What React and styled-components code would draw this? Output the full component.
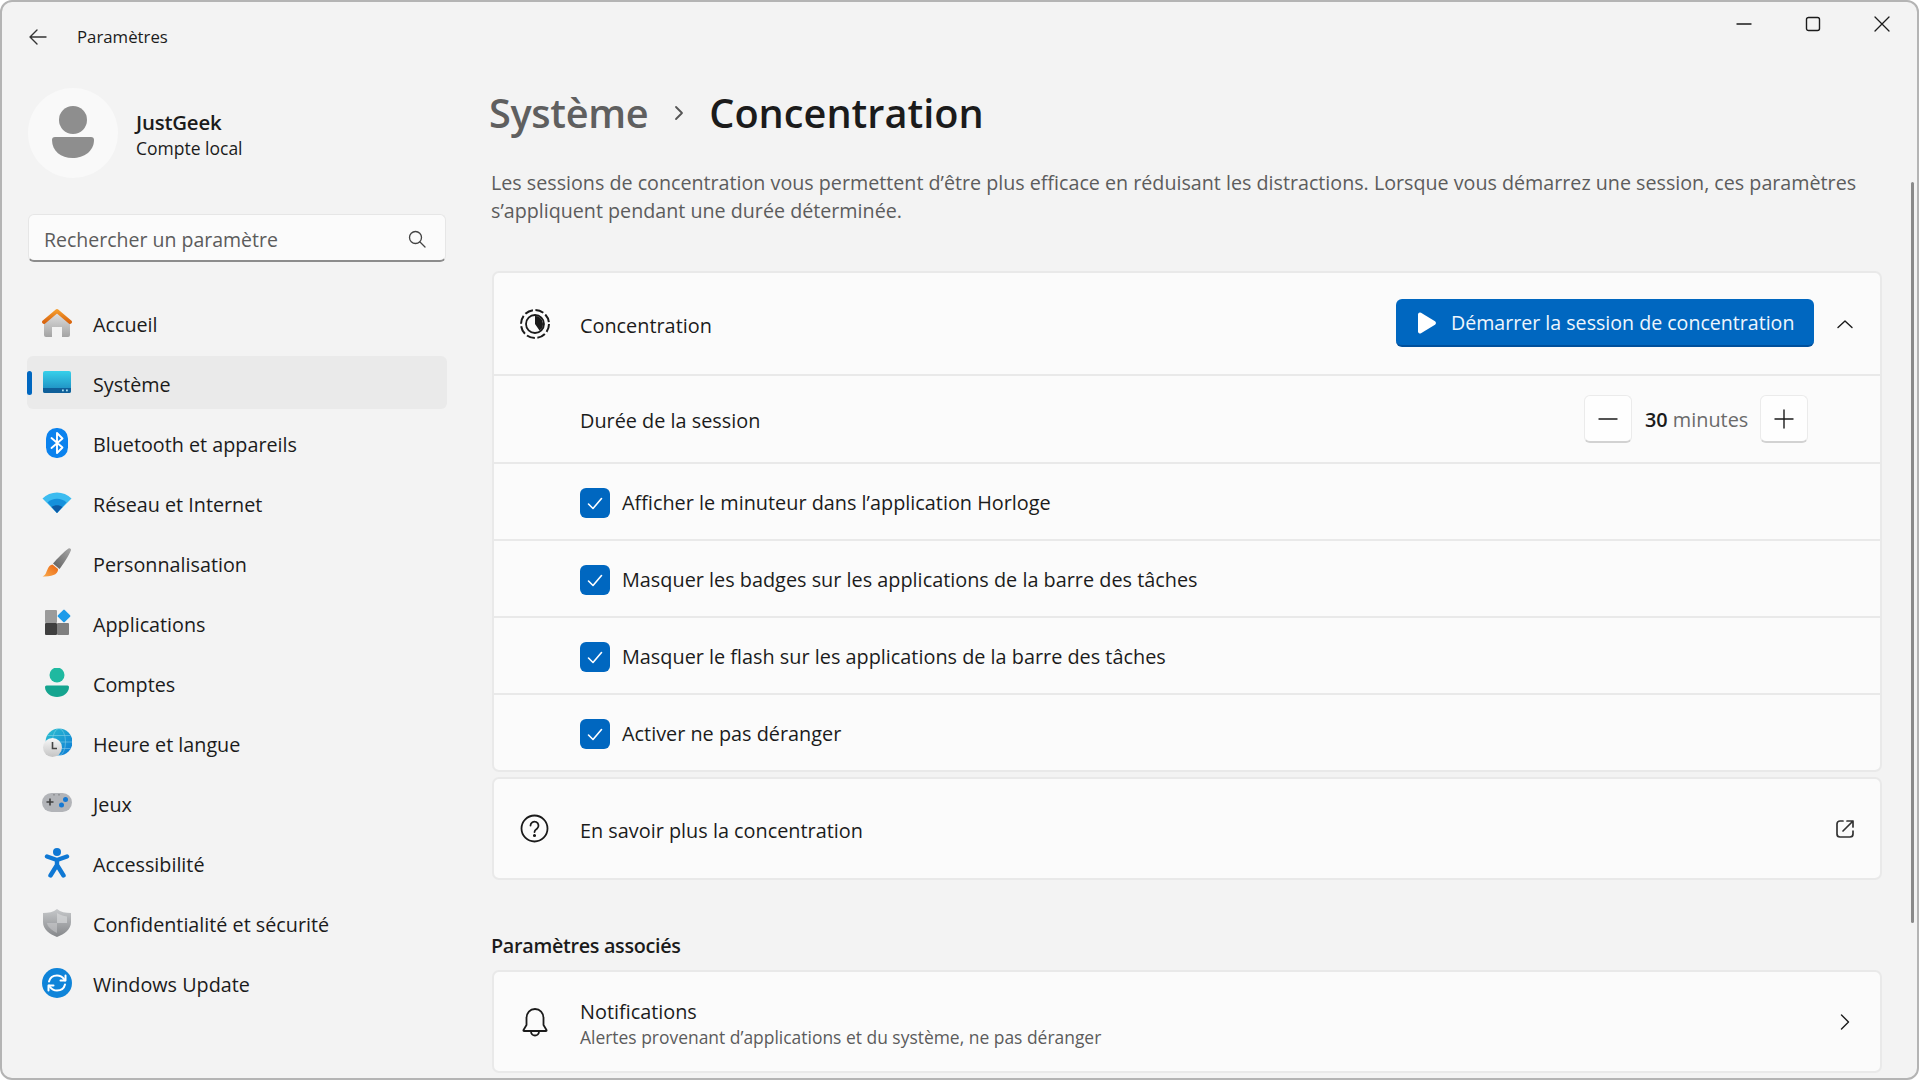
import React from "react";
import styled, { createGlobalStyle } from "styled-components";

const GlobalStyle = createGlobalStyle`
  html, body {
    margin: 0;
    background: #fff;
  }
  body {
    font-family: "Open Sans", "Noto Sans", "Liberation Sans", sans-serif;
    color: #1b1b1b;
  }
`;

const Window = styled.div`
  position: relative;
  width: 1919px;
  height: 1080px;
  box-sizing: border-box;
  display: flex;
  flex-direction: column;
  overflow: hidden;
  background: #f3f3f3;
  border: 2px solid #b4b4b4;
  border-radius: 12px;
`;

const TitleBar = styled.div`
  flex: none;
  height: 70px;
  display: flex;
  align-items: flex-start;
  padding-left: 26px;
`;

const BackButton = styled.div`
  width: 20px;
  height: 70px;
  display: flex;
  align-items: center;
`;

const AppTitle = styled.div`
  margin-left: 29px;
  height: 70px;
  line-height: 70px;
  font-size: 16.8px;
`;

const Controls = styled.div`
  margin-left: auto;
  display: flex;
  margin-right: 1px;
`;

const ControlButton = styled.div`
  width: 69px;
  height: 44px;
  display: flex;
  align-items: center;
  justify-content: center;
`;

const Body = styled.div`
  flex: 1;
  min-height: 0;
  display: flex;
`;

const Sidebar = styled.aside`
  flex: none;
  width: 478px;
  box-sizing: border-box;
  padding: 16px 34px 0 25px;
`;

const User = styled.div`
  display: flex;
  align-items: center;
  gap: 18px;
  margin-left: 1px;
`;

const Avatar = styled.div`
  width: 90px;
  height: 90px;
  border-radius: 50%;
  background: #f9f9f9;
  display: flex;
  align-items: center;
  justify-content: center;
`;

const UserText = styled.div`
  display: flex;
  flex-direction: column;
  margin-top: 2px;
`;

const UserName = styled.div`
  font-size: 20.4px;
  font-weight: 600;
  line-height: 28px;
  letter-spacing: -0.2px;
`;

const UserKind = styled.div`
  font-size: 17.5px;
  line-height: 24px;
`;

const Search = styled.div`
  margin: 36px 0 0 1px;
  height: 48px;
  box-sizing: border-box;
  display: flex;
  align-items: center;
  justify-content: space-between;
  padding: 3px 18px 0 15px;
  background: #fbfbfb;
  border: 1.5px solid #e6e6e6;
  border-bottom: 2px solid #8c8c8c;
  border-radius: 6px;
  font-size: 19.5px;
  color: #5c5c5c;
`;

const Nav = styled.nav`
  margin-top: 34px;
  display: flex;
  flex-direction: column;
  gap: 7px;
`;

const NavItem = styled.div`
  position: relative;
  height: 53px;
  display: flex;
  align-items: center;
  gap: 21px;
  padding-left: 15px;
  margin-right: -1px;
  border-radius: 6px;
  font-size: 19.75px;
  background: ${(p) => (p.$active ? "#eaeaea" : "transparent")};

  &::before {
    content: "";
    display: ${(p) => (p.$active ? "block" : "none")};
    position: absolute;
    left: 0;
    top: 15px;
    width: 5px;
    height: 24px;
    border-radius: 3px;
    background: #0067c0;
  }
`;

const NavLabel = styled.span`
  padding-top: 4px;
`;

const Main = styled.main`
  flex: 1;
  min-width: 0;
  padding: 12px 35px 0 12px;
`;

const Breadcrumb = styled.div`
  display: flex;
  align-items: center;
  height: 58px;
  margin-left: -3px;
  font-size: 39.7px;
  font-weight: 600;
`;

const Crumb = styled.span`
  color: ${(p) => (p.$current ? "#1b1b1b" : "#5f5f5f")};
  letter-spacing: ${(p) => (p.$current ? "0" : "-0.35px")};
`;

const CrumbSep = styled.span`
  display: flex;
  width: 61px;
  justify-content: center;
`;

const Description = styled.p`
  margin: 27px 0 0 -1px;
  font-size: 19.7px;
  line-height: 28px;
  color: #5c5c5c;
`;

const Card = styled.section`
  box-sizing: border-box;
  margin-top: ${(p) => p.$top}px;
  background: #fbfbfb;
  border: 2px solid #e9e9e9;
  border-radius: 7px;
  overflow: hidden;
`;

const Row = styled.div`
  box-sizing: border-box;
  height: ${(p) => p.$height}px;
  display: flex;
  align-items: center;
  padding: ${(p) => p.$pad ?? 0}px 20px 0 ${(p) => p.$left ?? 26}px;
  font-size: 19.85px;
  & + & {
    border-top: 2px solid #e9e9e9;
  }
`;

const RowIcon = styled.span`
  flex: none;
  width: 30px;
  height: 30px;
  margin-right: 30px;
  display: flex;
  align-items: center;
  justify-content: center;
`;

const RowLabel = styled.span`
  padding-top: 3px;
`;

const RowEnd = styled.div`
  margin-left: auto;
  display: flex;
  align-items: center;
`;

const RowTail = styled.span`
  margin-left: auto;
  width: 30px;
  height: 30px;
  display: flex;
  align-items: center;
  justify-content: center;
`;

const PrimaryButton = styled.div`
  box-sizing: border-box;
  width: 418px;
  height: 48px;
  display: flex;
  align-items: center;
  gap: 14px;
  padding: 2px 0 0 21px;
  margin: 0 16px 2px 0;
  color: #eef6fd;
  background: #0067c0;
  border-bottom: 2px solid #00509c;
  border-radius: 6px;
  font-size: 19.6px;
`;

const Stepper = styled.div`
  display: flex;
  align-items: center;
  margin-right: 52px;
`;

const StepButton = styled.div`
  box-sizing: border-box;
  width: 48px;
  height: 48px;
  display: flex;
  align-items: center;
  justify-content: center;
  background: #fefefe;
  border: 1.5px solid #ebebeb;
  border-bottom: 2px solid #d2d2d2;
  border-radius: 6px;
`;

const StepValue = styled.div`
  width: 128px;
  padding-left: 13px;
  box-sizing: border-box;
  color: #6a6a6a;
  white-space: nowrap;
`;

const Strong = styled.strong`
  font-weight: 600;
  color: #1b1b1b;
`;

const CheckBox = styled.span`
  flex: none;
  width: 30px;
  height: 30px;
  margin-right: 12px;
  display: flex;
  align-items: center;
  justify-content: center;
  background: #0067c0;
  border-radius: 6px;
`;

const SectionTitle = styled.h2`
  margin: 52px 0 10px -1px;
  font-size: 19.75px;
  line-height: 28px;
  font-weight: 600;
  letter-spacing: -0.3px;
`;

const RowText = styled.div`
  display: flex;
  flex-direction: column;
  padding-top: 3px;
`;

const RowHint = styled.div`
  font-size: 17.45px;
  line-height: 24px;
  color: #5c5c5c;
`;

const Scrollbar = styled.div`
  position: absolute;
  right: 3px;
  top: 180px;
  width: 3px;
  height: 741px;
  border-radius: 2px;
  background: #8a8a8a;
`;

const Glyph = ({ size = 24, children, ...rest }) => (
  <svg
    width={size}
    height={size}
    viewBox="0 0 24 24"
    fill="none"
    stroke="#1b1b1b"
    strokeWidth="1.4"
    strokeLinecap="round"
    strokeLinejoin="round"
    {...rest}
  >
    {children}
  </svg>
);

const NavSvg = ({ children }) => (
  <svg width="30" height="30" viewBox="0 0 30 30" style={{ flex: "none" }}>
    {children}
  </svg>
);

const HomeIcon = () => (
  <NavSvg>
    <defs>
      <linearGradient id="homeBody" x1="0" y1="0" x2="0" y2="1">
        <stop offset="0" stopColor="#e4e4e4" />
        <stop offset="1" stopColor="#a3a3a3" />
      </linearGradient>
      <linearGradient id="homeRoof" x1="0" y1="0" x2="0" y2="1">
        <stop offset="0" stopColor="#f39a2c" />
        <stop offset="1" stopColor="#d9650f" />
      </linearGradient>
    </defs>
    <path
      d="M2 13L15 3l13 10v14a2 2 0 0 1-2 2h-6V19h-10v10H4a2 2 0 0 1-2-2z"
      fill="url(#homeBody)"
    />
    <path
      d="M2 14L15 3l13 11"
      fill="none"
      stroke="url(#homeRoof)"
      strokeWidth="3.8"
      strokeLinecap="round"
      strokeLinejoin="round"
    />
  </NavSvg>
);

const SystemIcon = () => (
  <NavSvg>
    <defs>
      <linearGradient id="sysFace" x1="0" y1="0" x2="0" y2="1">
        <stop offset="0" stopColor="#37d0ea" />
        <stop offset="1" stopColor="#1b86bd" />
      </linearGradient>
    </defs>
    <rect x="1" y="3" width="28" height="22" rx="2" fill="url(#sysFace)" />
    <path d="M1 20h28v3a2 2 0 0 1-2 2H3a2 2 0 0 1-2-2z" fill="#0f5f99" />
    <rect x="20" y="21.5" width="1.8" height="1.8" fill="#a8dcef" />
    <rect x="24" y="21.5" width="1.8" height="1.8" fill="#a8dcef" />
  </NavSvg>
);

const BluetoothIcon = () => (
  <NavSvg>
    <rect x="4" y="0" width="22" height="30" rx="10.5" fill="#0a82ee" />
    <path
      d="M9.5 10l11 9.5L15 25V5l5.5 5.5L9.5 20"
      fill="none"
      stroke="#fff"
      strokeWidth="1.9"
      strokeLinejoin="round"
      strokeLinecap="round"
    />
  </NavSvg>
);

const WifiIcon = () => (
  <NavSvg>
    <path d="M0.5 10.5C8 2.5 22 2.5 29.5 10.5L15 25z" fill="#3cbcf0" />
    <path d="M5.5 14.5C10.5 9.5 19.5 9.5 24.5 14.5L15 25z" fill="#1590dc" />
    <path d="M9.5 19C13 16.5 17 16.5 20.5 19L15 25z" fill="#0c5ba6" />
  </NavSvg>
);

const BrushIcon = () => (
  <NavSvg>
    <defs>
      <linearGradient id="brushTip" x1="0" y1="1" x2="1" y2="0">
        <stop offset="0" stopColor="#f9a94a" />
        <stop offset="1" stopColor="#ea6412" />
      </linearGradient>
      <linearGradient id="brushHandle" x1="0" y1="1" x2="1" y2="0">
        <stop offset="0" stopColor="#5e5e5e" />
        <stop offset="1" stopColor="#a8a8a8" />
      </linearGradient>
    </defs>
    <path
      d="M26.5 0.5c1.5-.8 3 .6 2.4 2C26.5 8.5 21 16.5 17.5 21l-6.5-5.5C15 11 22.5 3 26.5 0.5z"
      fill="url(#brushHandle)"
    />
    <path
      d="M10.5 16.5l5.5 4.5c.3 4-3.5 8-15.4 7.4 3.8-1.8 3.6-5 5.3-8 1-1.8 2.6-3.8 4.6-3.9z"
      fill="url(#brushTip)"
    />
  </NavSvg>
);

const AppsIcon = () => (
  <NavSvg>
    <rect x="3" y="2" width="12" height="13" rx="1" fill="#9b9b9b" />
    <rect x="3" y="15" width="12" height="12" rx="1" fill="#3f3f3f" />
    <rect x="15" y="15" width="12" height="12" rx="1" fill="#7f7f7f" />
    <rect
      x="17.2"
      y="3.2"
      width="9.6"
      height="9.6"
      rx="1"
      fill="#1c9bea"
      transform="rotate(45 22 8)"
    />
  </NavSvg>
);

const AccountIcon = () => (
  <NavSvg>
    <circle cx="15" cy="7" r="7.5" fill="#1fb9a0" />
    <path
      d="M3 19a1.5 1.5 0 0 1 1.5-1.5h21A1.5 1.5 0 0 1 27 19c0 6-6 10-12 10S3 25 3 19z"
      fill="#15a48f"
    />
  </NavSvg>
);

const TimeIcon = () => (
  <NavSvg>
    <defs>
      <linearGradient id="globeFill" x1="0" y1="0" x2="1" y2="1">
        <stop offset="0" stopColor="#2cc2cf" />
        <stop offset="1" stopColor="#0c78d6" />
      </linearGradient>
      <linearGradient id="clockFill" x1="0" y1="0" x2="0" y2="1">
        <stop offset="0" stopColor="#f8f8f8" />
        <stop offset="1" stopColor="#c4c4c4" />
      </linearGradient>
    </defs>
    <circle cx="17" cy="14" r="13.5" fill="url(#globeFill)" />
    <g fill="none" stroke="#bfeaf5" strokeWidth="0.7" opacity="0.55">
      <ellipse cx="17" cy="14" rx="6.5" ry="13.5" />
      <path d="M3.5 14h27M5.5 7.5h23M5.5 20.5h23" />
    </g>
    <circle cx="10.5" cy="19.5" r="9.5" fill="url(#clockFill)" />
    <path d="M10.5 14v6.5h4.5" fill="none" stroke="#444" strokeWidth="1.6" />
  </NavSvg>
);

const GameIcon = () => (
  <NavSvg>
    <rect x="0" y="5" width="30" height="19" rx="9.5" fill="#b2b4b8" />
    <path d="M8 10.5v7M4.5 14h7" stroke="#3f3f3f" strokeWidth="1.6" />
    <circle cx="19.5" cy="17" r="2.5" fill="#1578d2" />
    <circle cx="23.5" cy="11.5" r="2.5" fill="#1578d2" />
    <circle cx="12" cy="6.8" r="0.6" fill="#555" />
    <circle cx="17" cy="6.8" r="0.6" fill="#555" />
  </NavSvg>
);

const AccessIcon = () => (
  <NavSvg>
    <circle cx="15" cy="4" r="4" fill="#0f78d4" />
    <path
      d="M5 8.5L15 12L25 8.5M15 12V17M15 17L8.5 27.5M15 17L21.5 27.5"
      fill="none"
      stroke="#0f78d4"
      strokeWidth="4.4"
      strokeLinecap="round"
      strokeLinejoin="round"
    />
  </NavSvg>
);

const ShieldIcon = () => (
  <NavSvg>
    <defs>
      <linearGradient id="shieldFill" x1="0" y1="0" x2="0" y2="1">
        <stop offset="0" stopColor="#c6c8ca" />
        <stop offset="1" stopColor="#85878a" />
      </linearGradient>
    </defs>
    <path
      d="M15 1c3.6 3 8.6 4 14 4v9c0 7.5-6.5 12-14 15C7.5 26 1 21.5 1 14V5c5.4 0 10.4-1 14-4z"
      fill="url(#shieldFill)"
    />
    <path d="M15 5c3 2 6.5 3 10 3.5V15H15z" fill="#d6d7d9" opacity="0.7" />
    <path d="M15 15H5c.5 4 5 7.5 10 10z" fill="#d6d7d9" opacity="0.45" />
  </NavSvg>
);

const UpdateIcon = () => (
  <NavSvg>
    <circle cx="15" cy="15" r="15" fill="#0f84d9" />
    <g
      fill="none"
      stroke="#fff"
      strokeWidth="2"
      strokeLinecap="round"
      strokeLinejoin="round"
    >
      <path d="M7 13.5C8 9.5 11.5 7.5 15 7.5c3 0 5.5 1.5 7 3.5l1 1.5" />
      <path d="M23.5 7.5v5h-5" />
      <path d="M23 16.5c-1 4-4.5 6-8 6-3 0-5.5-1.5-7-3.5l-1-1.5" />
      <path d="M6.5 22.5v-5h5" />
    </g>
  </NavSvg>
);

const navItems = [
  { label: "Accueil", icon: HomeIcon },
  { label: "Système", icon: SystemIcon, active: true },
  { label: "Bluetooth et appareils", icon: BluetoothIcon },
  { label: "Réseau et Internet", icon: WifiIcon },
  { label: "Personnalisation", icon: BrushIcon },
  { label: "Applications", icon: AppsIcon },
  { label: "Comptes", icon: AccountIcon },
  { label: "Heure et langue", icon: TimeIcon },
  { label: "Jeux", icon: GameIcon },
  { label: "Accessibilité", icon: AccessIcon },
  { label: "Confidentialité et sécurité", icon: ShieldIcon },
  { label: "Windows Update", icon: UpdateIcon },
];

const options = [
  "Afficher le minuteur dans l’application Horloge",
  "Masquer les badges sur les applications de la barre des tâches",
  "Masquer le flash sur les applications de la barre des tâches",
  "Activer ne pas déranger",
];

const App = () => (
  <>
    <GlobalStyle />
    <Window>
      <TitleBar>
        <BackButton>
          <Glyph size={20} viewBox="0 0 20 20" stroke="#333">
            <path d="M18 10H2M9 3l-7 7 7 7" />
          </Glyph>
        </BackButton>
        <AppTitle>Paramètres</AppTitle>
        <Controls>
          <ControlButton>
            <Glyph size={16} viewBox="0 0 16 16" strokeWidth="1.4">
              <path d="M1 8h14" />
            </Glyph>
          </ControlButton>
          <ControlButton>
            <Glyph size={16} viewBox="0 0 16 16" strokeWidth="1.4">
              <rect x="1.5" y="1.5" width="13" height="13" rx="2" />
            </Glyph>
          </ControlButton>
          <ControlButton>
            <Glyph size={16} viewBox="0 0 16 16" strokeWidth="1.3">
              <path d="M1 1l14 14M15 1L1 15" />
            </Glyph>
          </ControlButton>
        </Controls>
      </TitleBar>
      <Body>
        <Sidebar>
          <User>
            <Avatar>
              <svg width="44" height="54" viewBox="0 0 44 54">
                <circle cx="22" cy="14" r="14" fill="#8e8e8e" />
                <path
                  d="M1 34a3 3 0 0 1 3-3h36a3 3 0 0 1 3 3c0 11-10 18-21.5 18S1 45 1 34z"
                  fill="#8e8e8e"
                />
              </svg>
            </Avatar>
            <UserText>
              <UserName>JustGeek</UserName>
              <UserKind>Compte local</UserKind>
            </UserText>
          </User>
          <Search>
            Rechercher un paramètre
            <Glyph size={20} viewBox="0 0 20 20" stroke="#444" strokeWidth="1.3">
              <circle cx="8.5" cy="8.5" r="6" />
              <path d="M13 13l5 5" />
            </Glyph>
          </Search>
          <Nav>
            {navItems.map(({ label, icon: Icon, active }) => (
              <NavItem key={label} $active={active}>
                <Icon />
                <NavLabel>{label}</NavLabel>
              </NavItem>
            ))}
          </Nav>
        </Sidebar>
        <Main>
          <Breadcrumb>
            <Crumb>Système</Crumb>
            <CrumbSep>
              <Glyph size={18} viewBox="0 0 18 18" stroke="#555" strokeWidth="1.8">
                <path d="M6 3l6 6-6 6" />
              </Glyph>
            </CrumbSep>
            <Crumb $current>Concentration</Crumb>
          </Breadcrumb>
          <Description>
            Les sessions de concentration vous permettent d’être plus efficace en réduisant les
            distractions. Lorsque vous démarrez une session, ces paramètres s’appliquent pendant
            une durée déterminée.
          </Description>
          <Card $top={46}>
            <Row $height={101}>
              <RowIcon>
                <svg width="30" height="30" viewBox="0 0 30 30" fill="none">
                  <circle
                    cx="15"
                    cy="15"
                    r="14"
                    stroke="#1b1b1b"
                    strokeWidth="2"
                    strokeDasharray="8.4 2.6"
                  />
                  <circle cx="15" cy="15" r="9" stroke="#1b1b1b" strokeWidth="1.8" />
                  <path d="M15 7a8 8 0 0 1 4.5 14.6L15 15z" fill="#1b1b1b" />
                </svg>
              </RowIcon>
              <RowLabel>Concentration</RowLabel>
              <RowEnd>
                <PrimaryButton>
                  <svg width="20" height="24" viewBox="0 0 20 24">
                    <path
                      d="M1 3.5a2 2 0 0 1 3-1.7l14 8.5a2 2 0 0 1 0 3.4l-14 8.5a2 2 0 0 1-3-1.7z"
                      fill="#fff"
                    />
                  </svg>
                  Démarrer la session de concentration
                </PrimaryButton>
                <RowTail>
                  <Glyph size={18} viewBox="0 0 18 18">
                    <path d="M2 12.5L9 6l7 6.5" />
                  </Glyph>
                </RowTail>
              </RowEnd>
            </Row>
            <Row $height={88} $left={86}>
              <RowLabel>Durée de la session</RowLabel>
              <RowEnd>
                <Stepper>
                  <StepButton>
                    <Glyph size={20} viewBox="0 0 20 20">
                      <path d="M1 10h18" />
                    </Glyph>
                  </StepButton>
                  <StepValue>
                    <Strong>30</Strong> minutes
                  </StepValue>
                  <StepButton>
                    <Glyph size={20} viewBox="0 0 20 20">
                      <path d="M1 10h18M10 1v18" />
                    </Glyph>
                  </StepButton>
                </Stepper>
              </RowEnd>
            </Row>
            {options.map((label) => (
              <Row key={label} $height={77} $left={86} $pad={2}>
                <CheckBox>
                  <svg width="18" height="18" viewBox="0 0 18 18" fill="none">
                    <path
                      d="M2.5 10l4.5 4.5L15.5 4.5"
                      stroke="#fff"
                      strokeWidth="1.6"
                      strokeLinecap="round"
                      strokeLinejoin="round"
                    />
                  </svg>
                </CheckBox>
                {label}
              </Row>
            ))}
          </Card>
          <Card $top={5}>
            <Row $height={99}>
              <RowIcon>
                <Glyph size={30} viewBox="0 0 30 30" strokeWidth="1.8">
                  <circle cx="14.5" cy="14.5" r="13" />
                  <path d="M10.5 11.5a4 4 0 1 1 6.5 3.2c-1.5 1.1-2.5 1.8-2.5 3.3" />
                  <circle cx="14.5" cy="21.5" r="0.7" fill="#1b1b1b" />
                </Glyph>
              </RowIcon>
              <RowLabel>En savoir plus la concentration</RowLabel>
              <RowTail>
                <Glyph size={20} viewBox="0 0 20 20" stroke="#333" strokeWidth="1.7">
                  <path d="M8 2H5a3 3 0 0 0-3 3v10a3 3 0 0 0 3 3h10a3 3 0 0 0 3-3v-3" />
                  <path d="M12 2h6v6M18 2L8 12" />
                </Glyph>
              </RowTail>
            </Row>
          </Card>
          <SectionTitle>Paramètres associés</SectionTitle>
          <Card $top={0}>
            <Row $height={99}>
              <RowIcon>
                <Glyph size={30} viewBox="0 0 30 30" strokeWidth="1.8">
                  <path d="M15 2c-5 0-8.5 3.8-8.5 9v7l-3 5c-.2.6 0 1 .6 1h21.8c.6 0 .8-.4.6-1l-3-5v-7c0-5.2-3.5-9-8.5-9z" />
                  <path d="M11 24.5a4 4 0 0 0 8 0" />
                </Glyph>
              </RowIcon>
              <RowText>
                Notifications
                <RowHint>Alertes provenant d’applications et du système, ne pas déranger</RowHint>
              </RowText>
              <RowTail>
                <Glyph size={18} viewBox="0 0 18 18">
                  <path d="M5.5 2l7 7-7 7" />
                </Glyph>
              </RowTail>
            </Row>
          </Card>
        </Main>
      </Body>
      <Scrollbar />
    </Window>
  </>
);

export default App;
